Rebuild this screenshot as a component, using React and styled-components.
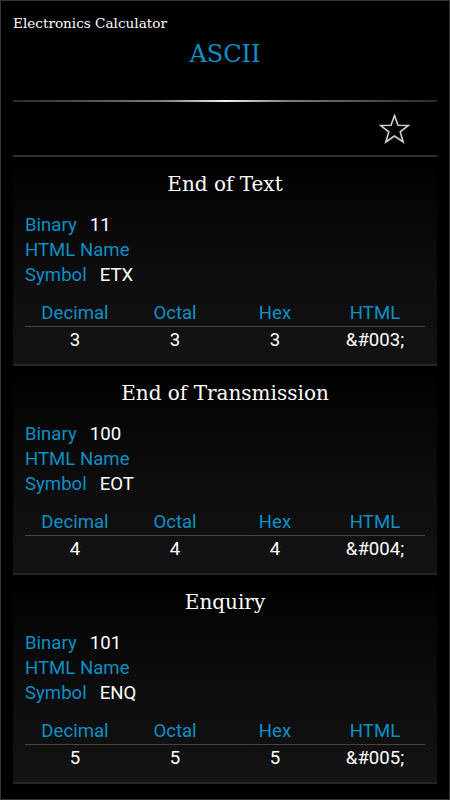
import React from 'react';
import styled, { createGlobalStyle } from 'styled-components';

const GlobalStyle = createGlobalStyle`
  html, body {
    margin: 0;
    padding: 0;
    background: #000;
  }
`;

const Screen = styled.div`
  box-sizing: border-box;
  width: 450px;
  height: 800px;
  overflow: hidden;
  background: #000;
  border: 1px solid #353535;
  padding: 0 12px;
  display: flex;
  flex-direction: column;
`;

const AppTitle = styled.div`
  font-family: "DejaVu Serif", "Liberation Serif", serif;
  font-size: 13.6px;
  color: #fff;
  margin-top: 13px;
  line-height: 18px;
`;

const PageTitle = styled.h1`
  margin: 8px 0 0;
  font-family: "DejaVu Serif", "Liberation Serif", serif;
  font-weight: normal;
  font-size: 24px;
  line-height: 28px;
  color: #0d8fc7;
  text-align: center;
`;

const GlowDivider = styled.div`
  margin-top: 32px;
  height: 2px;
  background: linear-gradient(90deg, #2a2a2a 0%, #7a7a7a 35%, #f0f0f0 50%, #7a7a7a 65%, #2a2a2a 100%);
`;

const ActionBar = styled.div`
  height: 53px;
  display: flex;
  align-items: center;
  justify-content: flex-end;
  padding-right: 27px;
  border-bottom: 2px solid #2e2e2e;
`;

const StarButton = styled.button`
  background: none;
  border: none;
  padding: 0;
  display: flex;
  cursor: pointer;
`;

const Card = styled.section`
  background: linear-gradient(180deg, #000 0%, #0b0b0b 45%, #131313 100%);
  border-bottom: 2px solid #262626;
  padding: 13px 12px 14px;
  height: 209px;
  box-sizing: border-box;
`;

const CardTitle = styled.h2`
  margin: 0;
  font-family: "DejaVu Serif", "Liberation Serif", serif;
  font-weight: normal;
  font-size: 20px;
  line-height: 28px;
  color: #fff;
  text-align: center;
`;

const Props = styled.div`
  margin-top: 15px;
  display: flex;
  flex-direction: column;
`;

const PropRow = styled.div`
  display: flex;
  gap: 13px;
  font-family: Roboto, "Noto Sans", sans-serif;
  font-size: 18.6px;
  line-height: 25px;
`;

const Label = styled.span`
  color: #0d8fc7;
`;

const Value = styled.span`
  color: #fff;
`;

const Table = styled.div`
  margin-top: 13px;
  display: grid;
  grid-template-columns: repeat(4, 1fr);
  font-family: Roboto, "Noto Sans", sans-serif;
  font-size: 18.6px;
  line-height: 25px;
  text-align: center;
`;

const HeadCell = styled.div`
  color: #0d8fc7;
  border-bottom: 1px solid #444;
`;

const Cell = styled.div`
  color: #fff;
  padding-top: 1px;
`;

const StarIcon = () => (
  <svg width="31" height="30" viewBox="0 0 31 30">
    <polygon
      points="15.5,1.5 19,11.3 29.5,11.5 21.2,17.9 24.2,28 15.5,22 6.8,28 9.8,17.9 1.5,11.5 12,11.3"
      fill="none"
      stroke="#d0d0d0"
      strokeWidth="1.6"
      strokeLinejoin="miter"
    />
  </svg>
);

const chars = [
  { name: 'End of Text', binary: '11', symbol: 'ETX', dec: '3', oct: '3', hex: '3', html: '&#003;' },
  { name: 'End of Transmission', binary: '100', symbol: 'EOT', dec: '4', oct: '4', hex: '4', html: '&#004;' },
  { name: 'Enquiry', binary: '101', symbol: 'ENQ', dec: '5', oct: '5', hex: '5', html: '&#005;' },
];

const CharCard = ({ c }) => (
  <Card>
    <CardTitle>{c.name}</CardTitle>
    <Props>
      <PropRow><Label>Binary</Label><Value>{c.binary}</Value></PropRow>
      <PropRow><Label>HTML Name</Label><Value></Value></PropRow>
      <PropRow><Label>Symbol</Label><Value>{c.symbol}</Value></PropRow>
    </Props>
    <Table>
      <HeadCell>Decimal</HeadCell>
      <HeadCell>Octal</HeadCell>
      <HeadCell>Hex</HeadCell>
      <HeadCell>HTML</HeadCell>
      <Cell>{c.dec}</Cell>
      <Cell>{c.oct}</Cell>
      <Cell>{c.hex}</Cell>
      <Cell>{c.html}</Cell>
    </Table>
  </Card>
);

export default function App() {
  return (
    <>
      <GlobalStyle />
      <Screen>
        <AppTitle>Electronics Calculator</AppTitle>
        <PageTitle>ASCII</PageTitle>
        <GlowDivider />
        <ActionBar>
          <StarButton aria-label="favourite"><StarIcon /></StarButton>
        </ActionBar>
        {chars.map((c) => <CharCard key={c.name} c={c} />)}
      </Screen>
    </>
  );
}
